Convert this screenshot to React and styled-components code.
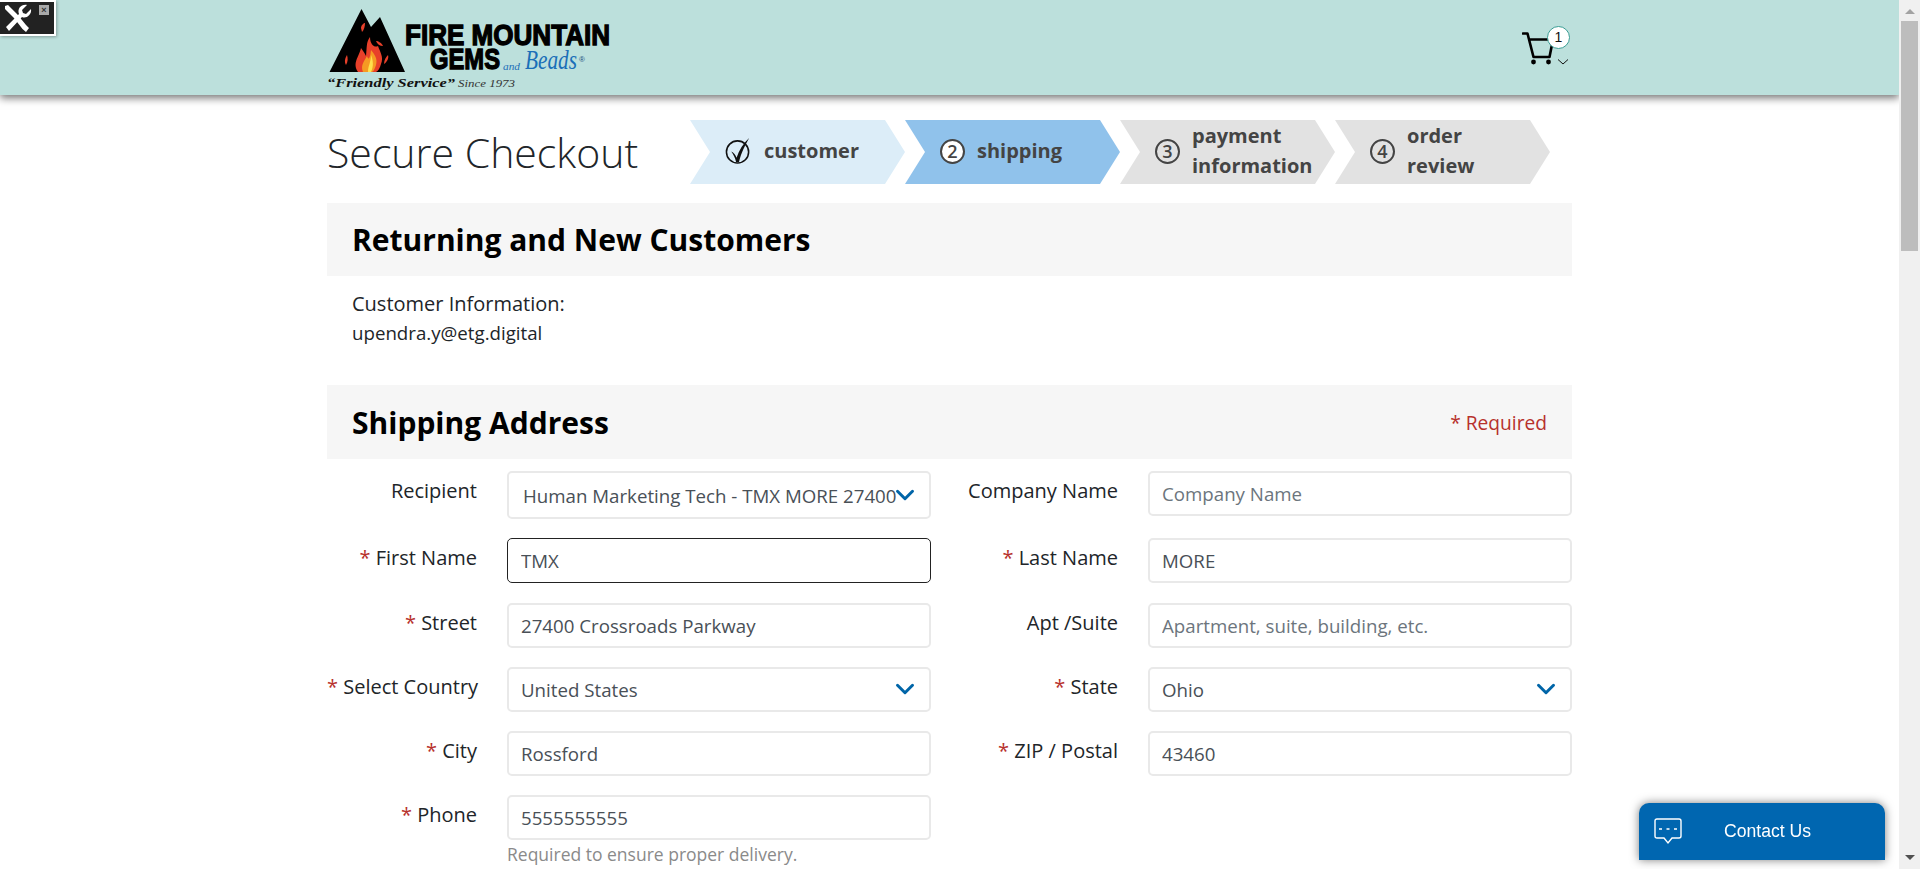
import styled, { createGlobalStyle } from 'styled-components';
import { ChevronDown } from 'lucide-react';

const GlobalStyle = createGlobalStyle`
  html, body {
    margin: 0;
    height: 100%;
    overflow: hidden;
    background: #fff;
  }
  * { box-sizing: border-box; }
`;

const Shell = styled.div`
  display: flex;
  height: 100vh;
  font-family: "Open Sans", "Liberation Sans", sans-serif;
  color: #212529;
`;

const Page = styled.div`
  flex: 1;
  min-width: 0;
  overflow: hidden;
`;

// the browser hides real scrollbars here, so it is drawn
const ScrollBar = styled.aside`
  flex: none;
  display: flex;
  flex-direction: column;
  align-items: center;
  width: 21px;
  background: #f0f0f0;
`;

const ScrollUp = styled.span`
  width: 0;
  height: 0;
  margin: 9px 0 7px;
  border-left: 5px solid transparent;
  border-right: 5px solid transparent;
  border-bottom: 5px solid #a3a3a3;
`;

const ScrollThumb = styled.div`
  width: 17px;
  height: 230px;
  background: #bdbdbd;
`;

const ScrollDown = styled.span`
  width: 0;
  height: 0;
  margin: auto 0 9px;
  border-left: 5px solid transparent;
  border-right: 5px solid transparent;
  border-top: 5px solid #505050;
`;

const Header = styled.header`
  height: 95px;
  background: #bce0dc;
  box-shadow: 0 3px 8px rgba(0, 0, 0, 0.55);
`;

const HeaderInner = styled.div`
  width: 1245px;
  height: 95px;
  margin: 0 auto;
  display: flex;
  align-items: flex-start;
  justify-content: space-between;
`;

const Cart = styled.div`
  position: relative;
  width: 48px;
  height: 42px;
  margin-top: 26px;
  margin-right: 2px;
`;

const CartBadge = styled.span`
  position: absolute;
  top: 0;
  right: 0;
  width: 23px;
  height: 23px;
  border-radius: 50%;
  background: #fff;
  border: 1px solid #3a9d94;
  font: 14px/21px "Liberation Sans", sans-serif;
  color: #111;
  text-align: center;
`;

const Main = styled.main`
  width: 1245px;
  margin: 0 auto;
  padding-top: 25px;
`;

const CheckoutTop = styled.div`
  display: flex;
  align-items: center;
  height: 64px;
  margin-bottom: 19px;
`;

const Title = styled.h1`
  width: 363px;
  margin: 0;
  font-size: 41px;
  font-weight: 300;
  color: #212529;
  white-space: nowrap;
`;

const Stepper = styled.ol`
  display: flex;
  margin: 0;
  padding: 0;
  list-style: none;
`;

const stepColors = { done: '#dcedf8', active: '#90c2eb', todo: '#e2e2e2' };

const Step = styled.li`
  display: flex;
  align-items: center;
  gap: 12px;
  width: 215px;
  height: 64px;
  padding: 0 0 2px 35px;
  background: ${(p) => stepColors[p.$state]};
  clip-path: polygon(0 0, calc(100% - 20px) 0, 100% 50%, calc(100% - 20px) 100%, 0 100%, 20px 50%);
  font-size: 20px;
  font-weight: 700;
  line-height: 30px;
  color: #444;
`;

const StepNumber = styled.span`
  flex: none;
  width: 25px;
  height: 25px;
  border-radius: 50%;
  border: 2px solid #444;
  background: ${(p) => (p.$active ? '#fff' : 'transparent')};
  font-size: 18px;
  font-weight: 600;
  line-height: 21px;
  text-align: center;
`;

const SectionBar = styled.div`
  display: flex;
  align-items: center;
  justify-content: space-between;
  height: ${(p) => p.$height}px;
  padding: 0 25px;
  background: #f6f6f6;
`;

const SectionTitle = styled.h2`
  margin: 0;
  font-size: 30px;
  font-weight: 700;
  color: #000;
`;

const RequiredNote = styled.span`
  font-size: 19.2px;
  color: #b7312c;
`;

const CustomerInfo = styled.div`
  height: 109px;
  padding: 13px 25px 0;
  line-height: 29px;
`;

const InfoLabel = styled.div`
  font-size: 20px;
`;

const InfoValue = styled.div`
  font-size: 18.7px;
`;

const FormGrid = styled.div`
  display: grid;
  grid-template-columns: 150px 424px 157px 424px;
  column-gap: 30px;
  row-gap: 19.25px;
  align-items: start;
  padding-top: 12px;
`;

const Label = styled.label`
  font-size: 20px;
  line-height: 28px;
  padding-top: 6px;
  text-align: right;
  white-space: nowrap;
  color: #212529;
`;

const Star = styled.span`
  color: #b7312c;
`;

const Field = styled.div`
  position: relative;
`;

const TextInput = styled.input`
  display: block;
  width: 100%;
  height: 45px;
  padding: 0 12px;
  border: 2px solid #e9e9e9;
  border-radius: 5px;
  outline: none;
  background: #fff;
  font-family: inherit;
  font-size: 18.7px;
  color: #495057;

  &::placeholder { color: #6c757d; }

  ${(p) => p.$focused && 'border: 1px solid #222; padding: 0 13px;'}
`;

const SelectInput = styled.select`
  display: block;
  width: 100%;
  height: ${(p) => p.$height || 45}px;
  padding: 0 ${(p) => (p.$wide ? 33 : 12)}px 0 ${(p) => (p.$wide ? 14 : 12)}px;
  border: 2px solid #e9e9e9;
  border-radius: 5px;
  outline: none;
  appearance: none;
  background: #fff;
  font-family: inherit;
  font-size: 18.7px;
  color: #495057;
`;

const SelectChevron = styled(ChevronDown)`
  position: absolute;
  right: 11px;
  top: 50%;
  transform: translateY(-50%);
  color: #0065a8;
  pointer-events: none;
`;

const HelpText = styled.div`
  margin-top: 2px;
  font-size: 17.5px;
  color: #8a8a8a;
`;

const ToolWidget = styled.div`
  position: fixed;
  top: 0;
  left: 0;
  width: 56px;
  height: 36px;
  background: #222;
  border: 2px solid #fff;
  border-left: 0;
  box-shadow: 1px 1px 3px rgba(0, 0, 0, 0.3);
`;

const ToolClose = styled.span`
  position: absolute;
  top: 3px;
  right: 5px;
  width: 10px;
  height: 10px;
  background: #aaa;
  color: #333;
  font: 700 9px/10px "Liberation Sans", sans-serif;
  text-align: center;
`;

const ContactButton = styled.div`
  position: fixed;
  right: 35px;
  bottom: 9px;
  display: flex;
  align-items: center;
  width: 246px;
  height: 57px;
  padding: 0 0 1px 15px;
  border-radius: 10px 10px 0 0;
  background: #0066b0;
  box-shadow: 0 0 10px rgba(0, 0, 0, 0.5);
  color: #fff;
  font: 17.6px "Liberation Sans", sans-serif;
`;

const ContactLabel = styled.span`
  margin-left: 42px;
`;

function Logo() {
  return (
    <svg width="293" height="95" viewBox="7 0 293 95">
      <path d="M9.5 72 41.5 9 51 27 60 17 85 72Z" fill="#000" />
      <path d="M38 72C32 63 39 57 41 48 44 52 45 54 46 56 47 48 46 42 50 37 50 45 55 48 58 46 60 52 64 57 61 64 60 68 58 71 56 72Z" fill="#e8402a" />
      <path d="M43 72C40 65 45 60 47 56 48 60 50 60 51 50 54 54 58 58 56 65 55 68 54 71 52 72Z" fill="#f59a23" />
      <path d="M48 72C48 66 51 62 51 55 53 60 54 66 51 72Z" fill="#ffe14d" />
      <path d="M41 28C41 25 44 23 45 23 45 26 44 30 42 32Z" fill="#e8402a" />
      <path d="M56 41C58 41 62 43 63 46 60 46 57 44 56 41Z" fill="#e8402a" />
      <path d="M27 55C25 58 24 62 26 65 28 62 28 58 27 55Z" fill="#e8402a" />
      <path d="M68 55C69 58 67 62 64 64 64 60 66 57 68 55Z" fill="#e8402a" />
      <text x="85" y="45" fontFamily="Liberation Sans" fontWeight="700" fontSize="29" textLength="205" lengthAdjust="spacingAndGlyphs" stroke="#000" strokeWidth="1.3">FIRE MOUNTAIN</text>
      <text x="110" y="69" fontFamily="Liberation Sans" fontWeight="700" fontSize="29" textLength="70" lengthAdjust="spacingAndGlyphs" stroke="#000" strokeWidth="1.3">GEMS</text>
      <text x="183" y="70" fontFamily="Liberation Serif" fontStyle="italic" fontSize="11" fill="#1a6fb8" textLength="17" lengthAdjust="spacingAndGlyphs">and</text>
      <text x="205" y="69" fontFamily="Liberation Serif" fontStyle="italic" fontSize="27" fill="#1a6fb8" textLength="52" lengthAdjust="spacingAndGlyphs">Beads</text>
      <text x="259" y="62" fontFamily="Liberation Sans" fontSize="8" fill="#1a4f80">®</text>
      <text x="7" y="87" fontFamily="Liberation Serif" fontStyle="italic" fontWeight="700" fontSize="13" textLength="128" lengthAdjust="spacingAndGlyphs" fill="#111">“Friendly Service”</text>
      <text x="138" y="87" fontFamily="Liberation Serif" fontStyle="italic" fontSize="11" textLength="57" lengthAdjust="spacingAndGlyphs" fill="#333">Since 1973</text>
    </svg>
  );
}

function CartIcon() {
  return (
    <svg width="48" height="42" viewBox="0 0 48 42" fill="none">
      <path d="M1 7.5H5.5L11.5 31H27.500L31 13.5H7" stroke="#000" strokeWidth="2.6" strokeLinejoin="round" strokeLinecap="round" />
      <circle cx="11.5" cy="36" r="2.4" fill="#000" />
      <circle cx="26.5" cy="36" r="2.4" fill="#000" />
      <path d="M36 33.5 41 38 46 33.5" stroke="#111" strokeWidth="1" />
    </svg>
  );
}

function CheckIcon() {
  return (
    <svg width="27" height="30" viewBox="0 0 28 30" fill="none">
      <circle cx="13" cy="16" r="11.5" stroke="#111" strokeWidth="1.6" />
      <path d="M6.500 15.500C9 16.500 11 19 12 22 14.500 14 19 7 25 1.500 21 9 17 16 14.500 26.500L11.500 26.500C10.500 22 9 19 6.500 15.500Z" fill="#111" />
    </svg>
  );
}

function ToolIcon() {
  return (
    <svg width="30" height="30" viewBox="0 0 30 30" style={{ display: 'block', margin: '1px 0 0 2px' }}>
      <path d="M3 3 6 2 15 11 24 22 27 25 24 29 20.5 26 12 15 3 6Z" fill="#fff" />
      <path d="M4 24 17 11C15 6 19 1 25 2L20 7 21 10 24 11 29 6C30 12 24 16 20 14L7 28Z" fill="#fff" />
    </svg>
  );
}

function ChatIcon() {
  return (
    <svg width="28" height="27" viewBox="0 0 28 27" fill="none" stroke="#fff" strokeWidth="1.4">
      <path d="M3 1H25Q27 1 27 3V18Q27 20 25 20H18L14 25 10 20H3Q1 20 1 18V3Q1 1 3 1Z" />
      <path d="M5 11H8M12.500 11H15.500M20 11H23" />
    </svg>
  );
}

function SelectField({ value, height, wide }) {
  return (
    <Field>
      <SelectInput $height={height} $wide={wide} defaultValue={value}>
        <option>{value}</option>
      </SelectInput>
      <SelectChevron size={30} strokeWidth={2.4} />
    </Field>
  );
}

export default function App() {
  return (
    <Shell>
      <GlobalStyle />
      <Page>
        <Header>
          <HeaderInner>
            <Logo />
            <Cart>
              <CartIcon />
              <CartBadge>1</CartBadge>
            </Cart>
          </HeaderInner>
        </Header>

        <Main>
          <CheckoutTop>
            <Title>Secure Checkout</Title>
            <Stepper>
              <Step $state="done"><CheckIcon /><span>customer</span></Step>
              <Step $state="active"><StepNumber $active>2</StepNumber><span>shipping</span></Step>
              <Step $state="todo"><StepNumber>3</StepNumber><span>payment<br />information</span></Step>
              <Step $state="todo"><StepNumber>4</StepNumber><span>order<br />review</span></Step>
            </Stepper>
          </CheckoutTop>

          <SectionBar $height={73}>
            <SectionTitle>Returning and New Customers</SectionTitle>
          </SectionBar>
          <CustomerInfo>
            <InfoLabel>Customer Information:</InfoLabel>
            <InfoValue>upendra.y@etg.digital</InfoValue>
          </CustomerInfo>

          <SectionBar $height={74}>
            <SectionTitle>Shipping Address</SectionTitle>
            <RequiredNote>* Required</RequiredNote>
          </SectionBar>

          <FormGrid>
            <Label>Recipient</Label>
            <SelectField value="Human Marketing Tech - TMX MORE 27400 Crossroads Parkway" height={48} wide />
            <Label>Company Name</Label>
            <TextInput placeholder="Company Name" />

            <Label><Star>*</Star> First Name</Label>
            <TextInput defaultValue="TMX" $focused />
            <Label><Star>*</Star> Last Name</Label>
            <TextInput defaultValue="MORE" />

            <Label><Star>*</Star> Street</Label>
            <TextInput defaultValue="27400 Crossroads Parkway" />
            <Label>Apt /Suite</Label>
            <TextInput placeholder="Apartment, suite, building, etc." />

            <Label><Star>*</Star> Select Country</Label>
            <SelectField value="United States" />
            <Label><Star>*</Star> State</Label>
            <SelectField value="Ohio" />

            <Label><Star>*</Star> City</Label>
            <TextInput defaultValue="Rossford" />
            <Label><Star>*</Star> ZIP / Postal</Label>
            <TextInput defaultValue="43460" />

            <Label><Star>*</Star> Phone</Label>
            <div>
              <TextInput defaultValue="5555555555" />
              <HelpText>Required to ensure proper delivery.</HelpText>
            </div>
          </FormGrid>
        </Main>
      </Page>

      <ScrollBar>
        <ScrollUp />
        <ScrollThumb />
        <ScrollDown />
      </ScrollBar>

      <ToolWidget>
        <ToolIcon />
        <ToolClose>×</ToolClose>
      </ToolWidget>

      <ContactButton>
        <ChatIcon />
        <ContactLabel>Contact Us</ContactLabel>
      </ContactButton>
    </Shell>
  );
}
